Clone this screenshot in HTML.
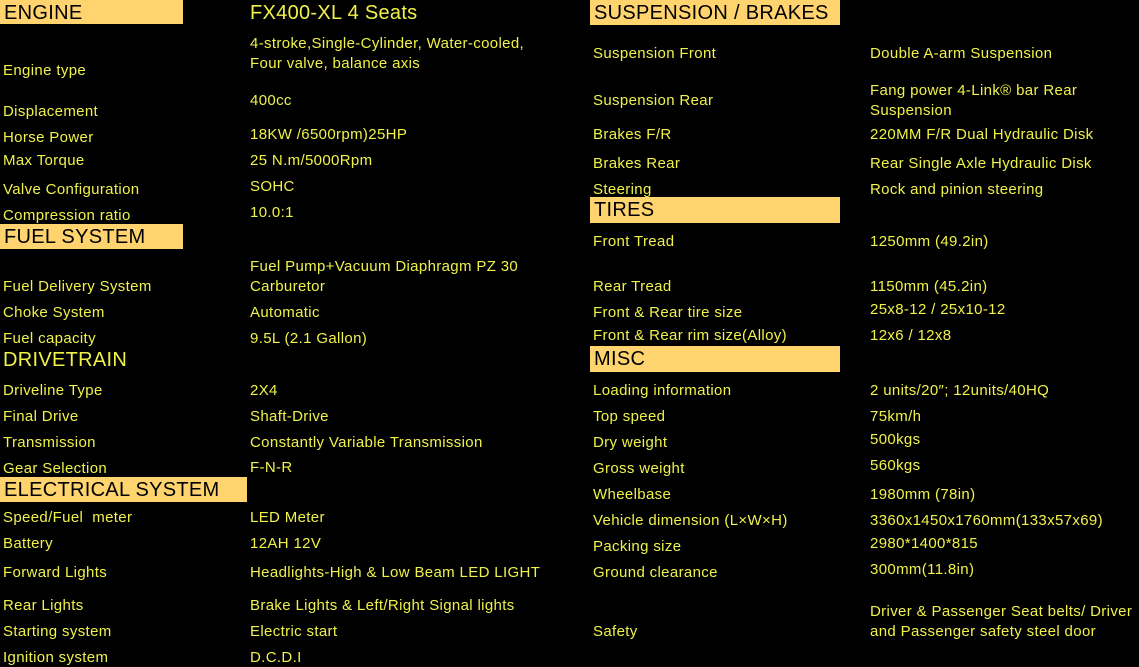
<!DOCTYPE html>
<html><head><meta charset="utf-8"><style>
body{margin:0;width:1139px;height:667px;background:#000;overflow:hidden;position:relative;font-family:"Liberation Sans",Arial,sans-serif;}
.t{position:absolute;font-size:15px;line-height:18px;color:#f0f24a;white-space:nowrap;letter-spacing:0.35px;margin-top:2px;}
.h{position:absolute;background:#ffd46e;color:#000;font-size:20px;line-height:24px;padding:1px 0 0 4px;box-sizing:border-box;letter-spacing:0.3px;}
.b{position:absolute;font-size:20px;line-height:24px;color:#f0f24a;letter-spacing:0.3px;margin-top:1px;}
</style></head><body>
<div class="h" style="left:0;top:0;width:183px;height:24px;">ENGINE</div>
<div class="b" style="left:250px;top:0;">FX400-XL 4 Seats</div>
<div class="t" style="left:250px;top:33px;">4-stroke,Single-Cylinder, Water-cooled,</div>
<div class="t" style="left:250px;top:53px;">Four valve, balance axis</div>
<div class="t" style="left:3px;top:60px;">Engine type</div>
<div class="t" style="left:3px;top:101px;">Displacement</div><div class="t" style="left:250px;top:90px;">400cc</div>
<div class="t" style="left:3px;top:127px;">Horse Power</div><div class="t" style="left:250px;top:124px;">18KW /6500rpm)25HP</div>
<div class="t" style="left:3px;top:150px;">Max Torque</div><div class="t" style="left:250px;top:150px;">25 N.m/5000Rpm</div>
<div class="t" style="left:3px;top:179px;">Valve Configuration</div><div class="t" style="left:250px;top:176px;">SOHC</div>
<div class="t" style="left:3px;top:205px;">Compression ratio</div><div class="t" style="left:250px;top:202px;">10.0:1</div>
<div class="h" style="left:0;top:224px;width:183px;height:25px;">FUEL SYSTEM</div>
<div class="t" style="left:250px;top:256px;">Fuel Pump+Vacuum Diaphragm PZ 30</div>
<div class="t" style="left:3px;top:276px;">Fuel Delivery System</div><div class="t" style="left:250px;top:276px;">Carburetor</div>
<div class="t" style="left:3px;top:302px;">Choke System</div><div class="t" style="left:250px;top:302px;">Automatic</div>
<div class="t" style="left:3px;top:328px;">Fuel capacity</div><div class="t" style="left:250px;top:328px;">9.5L (2.1 Gallon)</div>
<div class="b" style="left:3px;top:347px;">DRIVETRAIN</div>
<div class="t" style="left:3px;top:380px;">Driveline Type</div><div class="t" style="left:250px;top:380px;">2X4</div>
<div class="t" style="left:3px;top:406px;">Final Drive</div><div class="t" style="left:250px;top:406px;">Shaft-Drive</div>
<div class="t" style="left:3px;top:432px;">Transmission</div><div class="t" style="left:250px;top:432px;">Constantly Variable Transmission</div>
<div class="t" style="left:3px;top:458px;">Gear Selection</div><div class="t" style="left:250px;top:457px;">F-N-R</div>
<div class="h" style="left:0;top:477px;width:247px;height:25px;">ELECTRICAL SYSTEM</div>
<div class="t" style="left:3px;top:507px;">Speed/Fuel&nbsp; meter</div><div class="t" style="left:250px;top:507px;">LED Meter</div>
<div class="t" style="left:3px;top:533px;">Battery</div><div class="t" style="left:250px;top:533px;">12AH 12V</div>
<div class="t" style="left:3px;top:562px;">Forward Lights</div><div class="t" style="left:250px;top:562px;">Headlights-High &amp; Low Beam LED LIGHT</div>
<div class="t" style="left:3px;top:595px;">Rear Lights</div><div class="t" style="left:250px;top:595px;">Brake Lights &amp; Left/Right Signal lights</div>
<div class="t" style="left:3px;top:621px;">Starting system</div><div class="t" style="left:250px;top:621px;">Electric start</div>
<div class="t" style="left:3px;top:647px;">Ignition system</div><div class="t" style="left:250px;top:647px;">D.C.D.I</div>

<div class="h" style="left:590px;top:0;width:250px;height:25px;">SUSPENSION / BRAKES</div>
<div class="t" style="left:593px;top:43px;">Suspension Front</div><div class="t" style="left:870px;top:43px;">Double A-arm Suspension</div>
<div class="t" style="left:593px;top:90px;">Suspension Rear</div><div class="t" style="left:870px;top:80px;">Fang power 4-Link® bar Rear</div><div class="t" style="left:870px;top:100px;">Suspension</div>
<div class="t" style="left:593px;top:124px;">Brakes F/R</div><div class="t" style="left:870px;top:124px;">220MM F/R Dual Hydraulic Disk</div>
<div class="t" style="left:593px;top:153px;">Brakes Rear</div><div class="t" style="left:870px;top:153px;">Rear Single Axle Hydraulic Disk</div>
<div class="t" style="left:593px;top:179px;">Steering</div><div class="t" style="left:870px;top:179px;">Rock and pinion steering</div>
<div class="h" style="left:590px;top:197px;width:250px;height:26px;">TIRES</div>
<div class="t" style="left:593px;top:231px;">Front Tread</div><div class="t" style="left:870px;top:231px;">1250mm (49.2in)</div>
<div class="t" style="left:593px;top:276px;">Rear Tread</div><div class="t" style="left:870px;top:276px;">1150mm (45.2in)</div>
<div class="t" style="left:593px;top:302px;">Front &amp; Rear tire size</div><div class="t" style="left:870px;top:299px;">25x8-12 / 25x10-12</div>
<div class="t" style="left:593px;top:325px;">Front &amp; Rear rim size(Alloy)</div><div class="t" style="left:870px;top:325px;">12x6 / 12x8</div>
<div class="h" style="left:590px;top:346px;width:250px;height:26px;">MISC</div>
<div class="t" style="left:593px;top:380px;">Loading information</div><div class="t" style="left:870px;top:380px;">2 units/20″; 12units/40HQ</div>
<div class="t" style="left:593px;top:406px;">Top speed</div><div class="t" style="left:870px;top:406px;">75km/h</div>
<div class="t" style="left:593px;top:432px;">Dry weight</div><div class="t" style="left:870px;top:429px;">500kgs</div>
<div class="t" style="left:593px;top:458px;">Gross weight</div><div class="t" style="left:870px;top:455px;">560kgs</div>
<div class="t" style="left:593px;top:484px;">Wheelbase</div><div class="t" style="left:870px;top:484px;">1980mm (78in)</div>
<div class="t" style="left:593px;top:510px;">Vehicle dimension (L×W×H)</div><div class="t" style="left:870px;top:510px;">3360x1450x1760mm(133x57x69)</div>
<div class="t" style="left:593px;top:536px;">Packing size</div><div class="t" style="left:870px;top:533px;">2980*1400*815</div>
<div class="t" style="left:593px;top:562px;">Ground clearance</div><div class="t" style="left:870px;top:559px;">300mm(11.8in)</div>
<div class="t" style="left:593px;top:621px;">Safety</div><div class="t" style="left:870px;top:601px;">Driver &amp; Passenger Seat belts/ Driver</div><div class="t" style="left:870px;top:621px;">and Passenger safety steel door</div>
</body></html>
